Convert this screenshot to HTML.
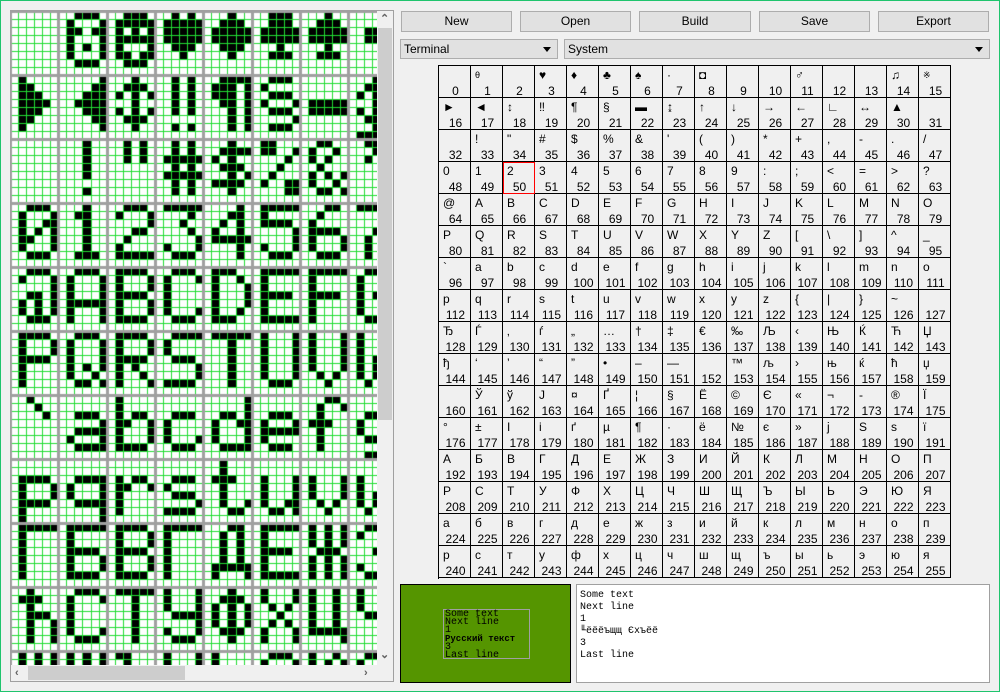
<!DOCTYPE html>
<html><head><meta charset="utf-8">
<style>
*{box-sizing:border-box;margin:0;padding:0}
html,body{width:1000px;height:692px;overflow:hidden;background:#f0f0f0;font-family:"Liberation Sans",sans-serif;font-size:12px;color:#000}
#frame{position:absolute;left:0;top:0;width:1000px;height:692px;border:1px solid #1fc46d}
#lp{position:absolute;left:10px;top:10px;width:384px;height:672px;border:1px solid #a0a0a0;background:#f0f0f0}
canvas{position:absolute;left:11px;top:11px}
.vs{position:absolute;left:377px;top:11px;width:16px;height:654px;background:#f0f0f0}
.vth{position:absolute;left:378px;top:28px;width:14px;height:392px;background:#cdcdcd}
.hs{position:absolute;left:11px;top:665px;width:366px;height:16px;background:#f0f0f0}
.hth{position:absolute;left:28px;top:666px;width:157px;height:14px;background:#cdcdcd}
.ar{position:absolute;color:#606060;font-size:11px;font-weight:bold;line-height:10px}
.btn{position:absolute;top:11px;height:21px;background:#e1e1e1;border:1px solid #adadad;text-align:center;line-height:19px}
.cb{position:absolute;top:39px;height:20px;background:#e1e1e1;border:1px solid #adadad;line-height:18px;padding-left:3px}
.cb:after{content:"";position:absolute;right:6px;top:7px;border:4px solid transparent;border-top:5px solid #000;border-bottom:0}
#tbl{position:absolute;left:438px;top:65px;width:513px;height:514px;border-left:1px solid #000;border-top:1px solid #000;display:grid;grid-template-columns:repeat(16,32px);grid-template-rows:repeat(16,32px)}
#tbl b{font-weight:normal;position:relative;border-right:1px solid #000;border-bottom:1px solid #000;padding:2px 0 0 4px;font-size:12px;line-height:14px}
#tbl b i{font-style:normal;position:absolute;left:0;right:-2px;bottom:0px;text-align:center;line-height:12px}
#tbl b.r{outline:1px solid #f00;outline-offset:-1px}
#gb{position:absolute;left:400px;top:584px;width:171px;height:99px;background:#559500;border:1px solid #000}
#gi{position:absolute;left:42px;top:24px;width:87px;height:50px;border:1px solid #a0a0a0;font-family:"Liberation Mono",monospace;font-size:10px;line-height:8.1px;padding-left:1px;padding-top:1px}
#wb{position:absolute;left:576px;top:584px;width:414px;height:99px;background:#fff;border:1px solid #a0a0a0;font-family:"Liberation Mono","DejaVu Sans Mono",monospace;font-size:10px;line-height:12px;padding:5px 0 0 3px}
</style></head><body>
<div id="frame"></div>
<div id="lp"></div>
<canvas id="cv" width="366" height="654"></canvas>
<div class="vs"></div><div class="vth"></div>
<div class="ar" style="left:380px;top:14px">&#8963;</div>
<div class="ar" style="left:380px;top:650px">&#8964;</div>
<div class="hs"></div><div class="hth"></div>
<div class="ar" style="left:15px;top:668px">&#8249;</div>
<div class="ar" style="left:364px;top:668px">&#8250;</div>

<div class="btn" style="left:401px;width:111px">New</div>
<div class="btn" style="left:520px;width:111px">Open</div>
<div class="btn" style="left:639px;width:112px">Build</div>
<div class="btn" style="left:759px;width:111px">Save</div>
<div class="btn" style="left:878px;width:111px">Export</div>
<div class="cb" style="left:400px;width:158px">Terminal</div>
<div class="cb" style="left:564px;width:426px">System</div>

<div id="tbl">
<b><i>0</i></b><b style="font-size:9px">&#952;<i style="font-size:12px">1</i></b><b><i>2</i></b><b>&#9829;<i>3</i></b><b>&#9830;<i>4</i></b><b>&#9827;<i>5</i></b><b>&#9824;<i>6</i></b><b>&#183;<i>7</i></b><b>&#9688;<i>8</i></b><b><i>9</i></b><b><i>10</i></b><b>&#9794;<i>11</i></b><b><i>12</i></b><b><i>13</i></b><b>&#9835;<i>14</i></b><b style="font-size:9px">&#8251;<i style="font-size:12px">15</i></b>
<b>&#9658;<i>16</i></b><b>&#9668;<i>17</i></b><b>&#8597;<i>18</i></b><b>&#8252;<i>19</i></b><b>&#182;<i>20</i></b><b>&#167;<i>21</i></b><b>&#9644;<i>22</i></b><b>&#8616;<i>23</i></b><b>&#8593;<i>24</i></b><b>&#8595;<i>25</i></b><b>&#8594;<i>26</i></b><b>&#8592;<i>27</i></b><b>&#8735;<i>28</i></b><b>&#8596;<i>29</i></b><b>&#9650;<i>30</i></b><b><i>31</i></b>
<b><i>32</i></b><b>!<i>33</i></b><b>"<i>34</i></b><b>#<i>35</i></b><b>$<i>36</i></b><b>%<i>37</i></b><b>&amp;<i>38</i></b><b>'<i>39</i></b><b>(<i>40</i></b><b>)<i>41</i></b><b>*<i>42</i></b><b>+<i>43</i></b><b>,<i>44</i></b><b>-<i>45</i></b><b>.<i>46</i></b><b>/<i>47</i></b>
<b>0<i>48</i></b><b>1<i>49</i></b><b class="r">2<i>50</i></b><b>3<i>51</i></b><b>4<i>52</i></b><b>5<i>53</i></b><b>6<i>54</i></b><b>7<i>55</i></b><b>8<i>56</i></b><b>9<i>57</i></b><b>:<i>58</i></b><b>;<i>59</i></b><b>&lt;<i>60</i></b><b>=<i>61</i></b><b>&gt;<i>62</i></b><b>?<i>63</i></b>
<b>@<i>64</i></b><b>A<i>65</i></b><b>B<i>66</i></b><b>C<i>67</i></b><b>D<i>68</i></b><b>E<i>69</i></b><b>F<i>70</i></b><b>G<i>71</i></b><b>H<i>72</i></b><b>I<i>73</i></b><b>J<i>74</i></b><b>K<i>75</i></b><b>L<i>76</i></b><b>M<i>77</i></b><b>N<i>78</i></b><b>O<i>79</i></b>
<b>P<i>80</i></b><b>Q<i>81</i></b><b>R<i>82</i></b><b>S<i>83</i></b><b>T<i>84</i></b><b>U<i>85</i></b><b>V<i>86</i></b><b>W<i>87</i></b><b>X<i>88</i></b><b>Y<i>89</i></b><b>Z<i>90</i></b><b>[<i>91</i></b><b>\<i>92</i></b><b>]<i>93</i></b><b>^<i>94</i></b><b>_<i>95</i></b>
<b>`<i>96</i></b><b>a<i>97</i></b><b>b<i>98</i></b><b>c<i>99</i></b><b>d<i>100</i></b><b>e<i>101</i></b><b>f<i>102</i></b><b>g<i>103</i></b><b>h<i>104</i></b><b>i<i>105</i></b><b>j<i>106</i></b><b>k<i>107</i></b><b>l<i>108</i></b><b>m<i>109</i></b><b>n<i>110</i></b><b>o<i>111</i></b>
<b>p<i>112</i></b><b>q<i>113</i></b><b>r<i>114</i></b><b>s<i>115</i></b><b>t<i>116</i></b><b>u<i>117</i></b><b>v<i>118</i></b><b>w<i>119</i></b><b>x<i>120</i></b><b>y<i>121</i></b><b>z<i>122</i></b><b>{<i>123</i></b><b>|<i>124</i></b><b>}<i>125</i></b><b>~<i>126</i></b><b><i>127</i></b>
<b>Ђ<i>128</i></b><b>Ѓ<i>129</i></b><b>‚<i>130</i></b><b>ѓ<i>131</i></b><b>„<i>132</i></b><b>…<i>133</i></b><b>†<i>134</i></b><b>‡<i>135</i></b><b>€<i>136</i></b><b>‰<i>137</i></b><b>Љ<i>138</i></b><b>‹<i>139</i></b><b>Њ<i>140</i></b><b>Ќ<i>141</i></b><b>Ћ<i>142</i></b><b>Џ<i>143</i></b>
<b>ђ<i>144</i></b><b>‘<i>145</i></b><b>’<i>146</i></b><b>“<i>147</i></b><b>”<i>148</i></b><b>•<i>149</i></b><b>–<i>150</i></b><b>—<i>151</i></b><b><i>152</i></b><b>™<i>153</i></b><b>љ<i>154</i></b><b>›<i>155</i></b><b>њ<i>156</i></b><b>ќ<i>157</i></b><b>ћ<i>158</i></b><b>џ<i>159</i></b>
<b><i>160</i></b><b>Ў<i>161</i></b><b>ў<i>162</i></b><b>Ј<i>163</i></b><b>¤<i>164</i></b><b>Ґ<i>165</i></b><b>¦<i>166</i></b><b>§<i>167</i></b><b>Ё<i>168</i></b><b>©<i>169</i></b><b>Є<i>170</i></b><b>«<i>171</i></b><b>¬<i>172</i></b><b>-<i>173</i></b><b>®<i>174</i></b><b>Ї<i>175</i></b>
<b>°<i>176</i></b><b>±<i>177</i></b><b>І<i>178</i></b><b>і<i>179</i></b><b>ґ<i>180</i></b><b>µ<i>181</i></b><b>¶<i>182</i></b><b>·<i>183</i></b><b>ё<i>184</i></b><b>№<i>185</i></b><b>є<i>186</i></b><b>»<i>187</i></b><b>ј<i>188</i></b><b>Ѕ<i>189</i></b><b>ѕ<i>190</i></b><b>ї<i>191</i></b>
<b>А<i>192</i></b><b>Б<i>193</i></b><b>В<i>194</i></b><b>Г<i>195</i></b><b>Д<i>196</i></b><b>Е<i>197</i></b><b>Ж<i>198</i></b><b>З<i>199</i></b><b>И<i>200</i></b><b>Й<i>201</i></b><b>К<i>202</i></b><b>Л<i>203</i></b><b>М<i>204</i></b><b>Н<i>205</i></b><b>О<i>206</i></b><b>П<i>207</i></b>
<b>Р<i>208</i></b><b>С<i>209</i></b><b>Т<i>210</i></b><b>У<i>211</i></b><b>Ф<i>212</i></b><b>Х<i>213</i></b><b>Ц<i>214</i></b><b>Ч<i>215</i></b><b>Ш<i>216</i></b><b>Щ<i>217</i></b><b>Ъ<i>218</i></b><b>Ы<i>219</i></b><b>Ь<i>220</i></b><b>Э<i>221</i></b><b>Ю<i>222</i></b><b>Я<i>223</i></b>
<b>а<i>224</i></b><b>б<i>225</i></b><b>в<i>226</i></b><b>г<i>227</i></b><b>д<i>228</i></b><b>е<i>229</i></b><b>ж<i>230</i></b><b>з<i>231</i></b><b>и<i>232</i></b><b>й<i>233</i></b><b>к<i>234</i></b><b>л<i>235</i></b><b>м<i>236</i></b><b>н<i>237</i></b><b>о<i>238</i></b><b>п<i>239</i></b>
<b>р<i>240</i></b><b>с<i>241</i></b><b>т<i>242</i></b><b>у<i>243</i></b><b>ф<i>244</i></b><b>х<i>245</i></b><b>ц<i>246</i></b><b>ч<i>247</i></b><b>ш<i>248</i></b><b>щ<i>249</i></b><b>ъ<i>250</i></b><b>ы<i>251</i></b><b>ь<i>252</i></b><b>э<i>253</i></b><b>ю<i>254</i></b><b>я<i>255</i></b>
</div>

<div id="gb"><div id="gi">Some text<br>Next line<br>1<br><span style="font-weight:bold;font-size:9px">Русский текст</span><br>3<br>Last line</div></div>
<div id="wb">Some text<br>Next line<br>1<br>╙ёёёъщщ Єхъёё<br>3<br>Last line</div>

<script>
(function(){
var G=[
[[],[0x0E,0x11,0x1B,0x11,0x15,0x11,0x0E],[0x0E,0x1F,0x15,0x1F,0x11,0x1B,0x0E],[0x0A,0x1F,0x1F,0x1F,0x0E,0x04],[0x04,0x0E,0x1F,0x1F,0x0E,0x04],[0x0E,0x0E,0x1F,0x1F,0x04,0x0E],[0x04,0x0E,0x1F,0x1F,0x04,0x0E],[0,0,0x0C,0x0C]],
[[0x10,0x18,0x1C,0x1E,0x1C,0x18,0x10],[0x01,0x03,0x07,0x0F,0x07,0x03,0x01],[0x04,0x0E,0x15,0x04,0x15,0x0E,0x04],[0x0A,0x0A,0x0A,0x0A,0x0A,0,0x0A],[0x0F,0x1D,0x1D,0x0D,0x05,0x05,0x05],[0x0E,0x10,0x0E,0x11,0x0E,0x01,0x0E],[0,0,0,0x1F,0x1F],[0x04,0x0E,0x15,0x04,0x15,0x0E,0x04,0x1F]],
[[],[0x04,0x04,0x04,0x04,0x04,0,0x04],[0x0A,0x0A,0x0A],[0x0A,0x0A,0x1F,0x0A,0x1F,0x0A,0x0A],[0x04,0x0F,0x14,0x0E,0x05,0x1E,0x04],[0x18,0x19,0x02,0x04,0x08,0x13,0x03],[0x0C,0x12,0x14,0x08,0x15,0x12,0x0D],[0x0C,0x04,0x08]],
[[0x0E,0x11,0x13,0x15,0x19,0x11,0x0E],[0x04,0x0C,0x04,0x04,0x04,0x04,0x0E],[0x0E,0x11,0x01,0x06,0x08,0x10,0x1F],[0x1F,0x02,0x04,0x02,0x01,0x11,0x0E],[0x02,0x06,0x0A,0x12,0x1F,0x02,0x02],[0x1F,0x10,0x1E,0x01,0x01,0x11,0x0E],[0x06,0x08,0x10,0x1E,0x11,0x11,0x0E],[0x1F,0x01,0x02,0x04,0x08,0x08,0x08]],
[[0x0E,0x11,0x01,0x0D,0x15,0x15,0x0E],[0x0E,0x11,0x11,0x11,0x1F,0x11,0x11],[0x1E,0x11,0x11,0x1E,0x11,0x11,0x1E],[0x0E,0x11,0x10,0x10,0x10,0x11,0x0E],[0x1C,0x12,0x11,0x11,0x11,0x12,0x1C],[0x1F,0x10,0x10,0x1E,0x10,0x10,0x1F],[0x1F,0x10,0x10,0x1E,0x10,0x10,0x10],[0x0E,0x11,0x10,0x17,0x11,0x11,0x0F]],
[[0x1E,0x11,0x11,0x1E,0x10,0x10,0x10],[0x0E,0x11,0x11,0x11,0x15,0x12,0x0D],[0x1E,0x11,0x11,0x1E,0x14,0x12,0x11],[0x0F,0x10,0x10,0x0E,0x01,0x01,0x1E],[0x1F,0x04,0x04,0x04,0x04,0x04,0x04],[0x11,0x11,0x11,0x11,0x11,0x11,0x0E],[0x11,0x11,0x11,0x11,0x11,0x0A,0x04],[0x11,0x11,0x11,0x15,0x15,0x15,0x0A]],
[[0x08,0x04,0x02],[0,0,0x0E,0x01,0x0F,0x11,0x0F],[0x10,0x10,0x16,0x19,0x11,0x11,0x1E],[0,0,0x0E,0x10,0x10,0x11,0x0E],[0x01,0x01,0x0D,0x13,0x11,0x11,0x0F],[0,0,0x0E,0x11,0x1F,0x10,0x0E],[0x06,0x09,0x08,0x1C,0x08,0x08,0x08],[0,0,0x0F,0x11,0x11,0x0F,0x01,0x0E]],
[[0,0,0x1E,0x11,0x11,0x1E,0x10,0x10],[0,0,0x0F,0x11,0x11,0x0F,0x01,0x01],[0,0,0x16,0x19,0x10,0x10,0x10],[0,0,0x0E,0x10,0x0E,0x01,0x1E],[0x08,0x08,0x1C,0x08,0x08,0x09,0x06],[0,0,0x11,0x11,0x11,0x13,0x0D],[0,0,0x11,0x11,0x11,0x0A,0x04],[0,0,0x11,0x11,0x15,0x15,0x0A]],
[[0x1F,0x10,0x10,0x10,0x10,0x10,0x10],[0x1F,0x10,0x10,0x1E,0x11,0x11,0x1E],[0x1E,0x11,0x11,0x1E,0x11,0x11,0x1E],[0x1F,0x10,0x10,0x10,0x10,0x10,0x10],[0x06,0x0A,0x0A,0x0A,0x0A,0x1F,0x11],[0x1F,0x10,0x10,0x1E,0x10,0x10,0x1F],[0x15,0x15,0x15,0x0E,0x15,0x15,0x15],[0x0E,0x11,0x01,0x06,0x01,0x11,0x0E]],
[[0x08,0x1C,0x08,0x0E,0x09,0x09,0x09],[0x0E,0x11,0x10,0x10,0x10,0x11,0x0E],[0x1F,0x04,0x04,0x04,0x04,0x04,0x04],[0x11,0x11,0x11,0x0F,0x01,0x11,0x0E],[0x04,0x0E,0x15,0x15,0x15,0x0E,0x04],[0x11,0x11,0x0A,0x04,0x0A,0x11,0x11],[0x12,0x12,0x12,0x12,0x12,0x1F,0x01],[0x11,0x11,0x11,0x0F,0x01,0x01,0x01]],
[[0x15,0x15,0x15,0x15,0x15,0x15,0x1F],[0x15,0x15,0x15,0x15,0x15,0x1F,0x01],[0x18,0x08,0x08,0x0E,0x09,0x09,0x0E],[0x11,0x11,0x11,0x19,0x15,0x15,0x19],[0x10,0x10,0x10,0x1E,0x11,0x11,0x1E],[0x0E,0x11,0x01,0x07,0x01,0x11,0x0E],[0x12,0x15,0x15,0x1D,0x15,0x15,0x12],[0x0F,0x11,0x11,0x0F,0x05,0x09,0x11]]
];
var cv=document.getElementById('cv'),c=cv.getContext('2d');
c.fillStyle="#fff";c.fillRect(0,0,366,654);
var X0=-1,Y0=-0.3,PW=48.33,PH=64,cw=PW/6,ch=8;
c.fillStyle="#000";
for(var r=0;r<G.length;r++)for(var k=0;k<8;k++){var g=G[r][k];
  var bx=X0+k*PW,by=Y0+r*PH;
  for(var j=0;j<g.length;j++)for(var i=0;i<5;i++)if(g[j]&(16>>i)){
    var x1=Math.round(bx+(i+1)*cw),x2=Math.round(bx+(i+2)*cw);
    c.fillRect(x1,Math.round(by+j*ch),x2-x1,ch);}
}
c.fillStyle="#22dd33";
for(var n=0;n<50;n++){var x=Math.round(X0+n*cw);c.fillRect(x,0,1,654);}
for(var n=0;n<84;n++){var y=Math.round(Y0+n*ch);c.fillRect(0,y,366,1);}
c.fillStyle="#a0a0a0";
for(var n=0;n<9;n++){var x=Math.round(X0+n*PW);c.fillRect(x-1,0,3,654);}
for(var n=0;n<12;n++){var y=Math.round(Y0+n*PH);c.fillRect(0,y-1,366,3);}
})();
</script>
</body></html>
